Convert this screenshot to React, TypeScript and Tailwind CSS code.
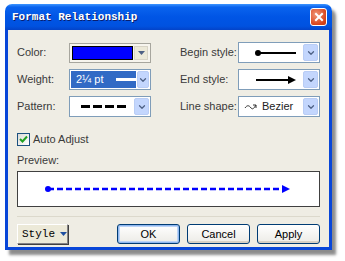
import { ChevronDown } from "lucide-react"

const label = "whitespace-nowrap text-[11px] text-[#3a3a3a]"

function XpCombo({ children, selected }: { children: React.ReactNode; selected?: boolean }) {
  return (
    <div className="flex h-[21px] w-[82px] shrink-0 items-stretch border border-[#7f9db9] bg-white p-[1px]">
      <div className={`flex flex-1 items-center whitespace-nowrap ${selected ? "bg-[#316ac5] text-white" : ""}`}>{children}</div>
      <div className="ml-[1px] flex w-[15px] items-center justify-center rounded-[2px] border border-[#b9cdf5] bg-[#c3d6fd]">
        <ChevronDown size={10} strokeWidth={3} className="text-[#4d6185]" />
      </div>
    </div>
  )
}

function Row({ name, children }: { name: string; children: React.ReactNode }) {
  return (
    <div className="flex h-[21px] items-center justify-between">
      <span className={label}>{name}</span>
      {children}
    </div>
  )
}

function XpButton({ text, focused }: { text: string; focused?: boolean }) {
  return (
    <button
      className={`h-[20px] w-[63px] rounded-[3px] border border-[#003c74] bg-gradient-to-b from-white to-[#ecebe6] text-[11px] text-black ${
        focused ? "shadow-[inset_0_0_0_1px_#8fb7ef,inset_0_0_0_2px_#bcd4f6]" : "shadow-[inset_0_-2px_0_#d6d0c5]"
      }`}
    >
      {text}
    </button>
  )
}

export default function App() {
  return (
    <div className="h-[261px] w-[345px] bg-white pl-[5px] pt-[4px] font-['Liberation_Sans']">
      <div className="flex h-[246px] w-[327px] flex-col rounded-t-[7px] shadow-[4px_5px_3px_rgba(0,0,0,0.45)]">
        {/* title bar */}
        <div className="flex h-[26px] shrink-0 items-center justify-between rounded-t-[7px] bg-[linear-gradient(to_bottom,#3d95ff_0%,#0a63ee_12%,#0055e5_50%,#0052e0_85%,#0343c8_100%)] pl-[7px] pr-[5px]">
          <span className="font-['Liberation_Mono'] text-[11px] font-bold text-white [text-shadow:1px_1px_0_#0a1e6e]">
            Format Relationship
          </span>
          <div className="flex h-[18px] w-[17px] items-center justify-center rounded-[3px] border border-white bg-[radial-gradient(circle_at_35%_35%,#f0987a,#d9441c_70%,#c23a14)]">
            <svg width="10" height="10" viewBox="0 0 10 10">
              <path d="M2 2 L8 8 M8 2 L2 8" stroke="white" strokeWidth="2" strokeLinecap="square" />
            </svg>
          </div>
        </div>
        {/* body */}
        <div className="flex flex-1 flex-col border-x-[3px] border-b-[3px] border-[#0846d8] bg-[#efede4] px-[9px] pt-[12px]">
          <div className="flex gap-[29px]">
            <div className="flex w-[134px] flex-col gap-[6px]">
              <Row name="Color:">
                <div className="flex h-[20px] w-[82px] items-stretch border border-[#a7a69e] bg-[#f7f5ee] p-[2px]">
                  <div className="flex-1 border border-black bg-[#0000ff]" />
                  <div className="ml-[1px] flex w-[14px] items-center justify-center border border-[#d8d4c6] bg-[#ece9d8]">
                    <svg width="7" height="4" viewBox="0 0 7 4">
                      <path d="M0 0 H7 L3.5 4 Z" fill="#4d6185" />
                    </svg>
                  </div>
                </div>
              </Row>
              <Row name="Weight:">
                <XpCombo selected>
                  <span className="ml-[5px] text-[11px]">2¼ pt</span>
                  <div className="ml-[12px] h-[3px] w-[20px] bg-white" />
                </XpCombo>
              </Row>
              <Row name="Pattern:">
                <XpCombo>
                  <div className="ml-[10px] flex gap-[3px]">
                    <div className="h-[3px] w-[9px] bg-black" />
                    <div className="h-[3px] w-[9px] bg-black" />
                    <div className="h-[3px] w-[9px] bg-black" />
                    <div className="h-[3px] w-[9px] bg-black" />
                  </div>
                </XpCombo>
              </Row>
            </div>
            <div className="flex w-[140px] flex-col gap-[6px]">
              <Row name="Begin style:">
                <XpCombo>
                  <svg width="50" height="10" viewBox="0 0 50 10" className="ml-[10px]">
                    <circle cx="8" cy="5" r="3" fill="black" />
                    <line x1="8" y1="5" x2="46" y2="5" stroke="black" strokeWidth="2" />
                  </svg>
                </XpCombo>
              </Row>
              <Row name="End style:">
                <XpCombo>
                  <svg width="50" height="10" viewBox="0 0 50 10" className="ml-[10px]">
                    <line x1="6" y1="5" x2="42" y2="5" stroke="black" strokeWidth="2" />
                    <path d="M38 1 L46 5 L38 9 Z" fill="black" />
                  </svg>
                </XpCombo>
              </Row>
              <Row name="Line shape:">
                <XpCombo>
                  <svg width="14" height="8" viewBox="0 0 14 8" className="ml-[4px]">
                    <path d="M1 5 C3 2 5 2 7 5 C9 7 10 5 12 2 M9 2 H12 V5" stroke="#333" strokeWidth="1" fill="none" />
                  </svg>
                  <span className="ml-[4px] text-[11px] text-[#222]">Bezier</span>
                </XpCombo>
              </Row>
            </div>
          </div>

          <div className="mt-[14px] flex items-center gap-[3px]">
            <div className="flex h-[13px] w-[13px] items-center justify-center border border-[#1c5180] bg-gradient-to-br from-[#dcdcd7] to-white">
              <svg width="9" height="9" viewBox="0 0 9 9">
                <path d="M1 4 L3.5 6.5 L8 1.5" stroke="#21a121" strokeWidth="2" fill="none" />
              </svg>
            </div>
            <span className={label}>Auto Adjust</span>
          </div>

          <span className={`${label} mt-[4px]`}>Preview:</span>
          <div className="mt-[3px] flex h-[36px] shrink-0 items-center justify-center border border-[#404040] bg-white">
            <svg width="250" height="10" viewBox="0 0 250 10">
              <circle cx="4" cy="5" r="3" fill="#0000ff" />
              <line x1="4" y1="5" x2="240" y2="5" stroke="#0000ff" strokeWidth="2.5" strokeDasharray="6 3" />
              <path d="M238 1 L246 5 L238 9 Z" fill="#0000ff" />
            </svg>
          </div>

          <div className="mt-[9px] h-[1px] bg-[#dcd9cc]" />

          <div className="mt-[7px] flex items-center">
            <button className="flex h-[20px] w-[51px] items-center gap-[5px] border border-[#848284] border-l-white border-t-white bg-[#ece9d8] pl-[4px] font-['Liberation_Mono'] text-[11px] text-black shadow-[1px_1px_0_#404040]">
              Style
              <svg width="7" height="4" viewBox="0 0 7 4">
                <path d="M0 0 H7 L3.5 4 Z" fill="#1f4f9f" />
              </svg>
            </button>
            <div className="ml-auto flex gap-[7px]">
              <XpButton text="OK" focused />
              <XpButton text="Cancel" />
              <XpButton text="Apply" />
            </div>
          </div>
        </div>
      </div>
    </div>
  )
}
